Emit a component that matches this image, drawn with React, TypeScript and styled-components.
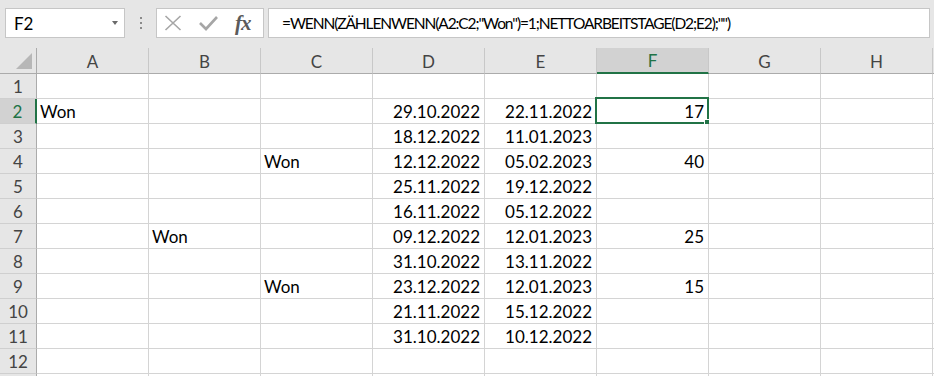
import React, { FC } from "react";
import styled, { createGlobalStyle, css } from "styled-components";

const GREEN = "#217346";
const FONT = `Lato, "Open Sans", "Liberation Sans", sans-serif`;

const GlobalStyle = createGlobalStyle`
  html, body {
    margin: 0;
    padding: 0;
    background: #e6e6e6;
    overflow: hidden;
  }
`;

const Page = styled.div`
  width: 934px;
  height: 376px;
  overflow: hidden;
  font-family: ${FONT};
  font-size: 17px;
  color: #000;
`;

const FormulaBar = styled.div`
  display: flex;
  align-items: center;
  height: 48px;
  box-sizing: border-box;
  padding: 8px 4px 10px 5px;
  background: #e6e6e6;
`;

const NameBox = styled.div`
  position: relative;
  display: flex;
  align-items: center;
  width: 120px;
  height: 30px;
  box-sizing: border-box;
  padding-left: 8px;
  background: #fff;
  border: 1px solid #c6c6c6;
`;

const DropArrow = styled.span`
  position: absolute;
  right: 6px;
  top: 12px;
  width: 0;
  height: 0;
  border-left: 3px solid transparent;
  border-right: 3px solid transparent;
  border-top: 4px solid #6a6a6a;
`;

const Grip = styled.div`
  display: flex;
  flex-direction: column;
  gap: 3px;
  margin: 0 14px 0 15px;
  span {
    width: 2px;
    height: 2px;
    background: #8a8a8a;
  }
`;

const FxButtons = styled.div`
  display: flex;
  align-items: center;
  gap: 17px;
  width: 108px;
  height: 30px;
  box-sizing: border-box;
  padding-left: 7px;
  background: #fff;
  border: 1px solid #c6c6c6;
`;

const IconSlot = styled.div`
  display: flex;
  align-items: center;
  height: 28px;
`;

const Fx = styled.span`
  font-family: "Liberation Serif", "DejaVu Serif", serif;
  font-style: italic;
  font-weight: bold;
  font-size: 21px;
  color: #5b5b5b;
  letter-spacing: -1px;
`;

const FormulaInput = styled.div`
  display: flex;
  align-items: center;
  flex: 1;
  height: 30px;
  box-sizing: border-box;
  margin-left: 4px;
  padding-left: 13px;
  background: #fff;
  border: 1px solid #c6c6c6;
  white-space: nowrap;
  font-size: 15.5px;
  letter-spacing: -1.1px;
`;

const Sheet = styled.div`
  display: grid;
  grid-template-columns: 37px repeat(8, 112px) 1fr;
  grid-template-rows: 26px;
  grid-auto-rows: 25px;
`;

const Corner = styled.div`
  position: relative;
  background: #e6e6e6;
  border-right: 1px solid #ababab;
  border-bottom: 1px solid #ababab;
  box-sizing: border-box;
  &::after {
    content: "";
    position: absolute;
    right: 4px;
    bottom: 4px;
    width: 0;
    height: 0;
    border-left: 16px solid transparent;
    border-bottom: 16px solid #b7b7b7;
  }
`;

const ColHead = styled.div<{ $active?: boolean }>`
  display: flex;
  align-items: center;
  justify-content: center;
  box-sizing: border-box;
  background: #e6e6e6;
  color: #444;
  border-right: 1px solid #c8c8c8;
  border-bottom: 1px solid #ababab;
  padding-top: 1px;
  ${({ $active }) =>
    $active &&
    css`
      background: #d2d2d2;
      color: ${GREEN};
      border-bottom: 2px solid ${GREEN};
    `}
`;

const RowHead = styled.div<{ $active?: boolean }>`
  display: flex;
  align-items: center;
  justify-content: center;
  box-sizing: border-box;
  background: #e6e6e6;
  color: #444;
  border-right: 1px solid #ababab;
  border-bottom: 1px solid #cfcfcf;
  padding-top: 1px;
  ${({ $active }) =>
    $active &&
    css`
      background: #d2d2d2;
      color: ${GREEN};
      border-right: 2px solid ${GREEN};
    `}
`;

const Cell = styled.div<{ $num?: boolean }>`
  position: relative;
  display: flex;
  align-items: center;
  justify-content: ${({ $num }) => ($num ? "flex-end" : "flex-start")};
  box-sizing: border-box;
  padding: 1px 4px 0 3px;
  background: #fff;
  border-right: 1px solid #d4d4d4;
  border-bottom: 1px solid #d4d4d4;
  white-space: nowrap;
`;

const Selection = styled.div`
  position: absolute;
  left: -2px;
  top: -2px;
  right: -1px;
  bottom: -1px;
  border: 2px solid ${GREEN};
  pointer-events: none;
  &::after {
    content: "";
    position: absolute;
    right: -4px;
    bottom: -4px;
    width: 5px;
    height: 5px;
    background: ${GREEN};
    border: 1px solid #fff;
  }
`;

const COLS = ["A", "B", "C", "D", "E", "F", "G", "H", ""];

type Row = (string | number | null)[];

const DATA: Row[] = [
  [null, null, null, null, null, null],
  ["Won", null, null, "29.10.2022", "22.11.2022", 17],
  [null, null, null, "18.12.2022", "11.01.2023", null],
  [null, null, "Won", "12.12.2022", "05.02.2023", 40],
  [null, null, null, "25.11.2022", "19.12.2022", null],
  [null, null, null, "16.11.2022", "05.12.2022", null],
  [null, "Won", null, "09.12.2022", "12.01.2023", 25],
  [null, null, null, "31.10.2022", "13.11.2022", null],
  [null, null, "Won", "23.12.2022", "12.01.2023", 15],
  [null, null, null, "21.11.2022", "15.12.2022", null],
  [null, null, null, "31.10.2022", "10.12.2022", null],
  [null, null, null, null, null, null],
  [null, null, null, null, null, null],
];

const isNum = (v: string | number | null) =>
  typeof v === "number" || (typeof v === "string" && /^\d/.test(v));

const App: FC = () => {
  return (
    <Page>
      <GlobalStyle />
      <FormulaBar>
        <NameBox>
          F2
          <DropArrow />
        </NameBox>
        <Grip>
          <span />
          <span />
          <span />
        </Grip>
        <FxButtons>
          <IconSlot>
            <svg width="18" height="16" viewBox="0 0 18 16">
              <path d="M1.5 1 L16.5 15 M16.5 1 L1.5 15" stroke="#a6a6a6" strokeWidth="1.6" />
            </svg>
          </IconSlot>
          <IconSlot>
            <svg width="19" height="16" viewBox="0 0 19 16">
              <path d="M1 8 L7 14 L18 2" stroke="#a6a6a6" strokeWidth="2.6" fill="none" />
            </svg>
          </IconSlot>
          <Fx>fx</Fx>
        </FxButtons>
        <FormulaInput>
          =WENN(ZÄHLENWENN(A2:C2;"Won")=1;NETTOARBEITSTAGE(D2;E2);"")
        </FormulaInput>
      </FormulaBar>
      <Sheet>
        <Corner />
        {COLS.map((c, i) => (
          <ColHead key={i} $active={c === "F"}>
            {c}
          </ColHead>
        ))}
        {DATA.map((row, r) => (
          <React.Fragment key={r}>
            <RowHead $active={r === 1}>{r < 12 ? r + 1 : null}</RowHead>
            {COLS.map((_, c) => {
              const v = c < row.length ? row[c] : null;
              return (
                <Cell key={c} $num={isNum(v)}>
                  {v}
                  {r === 1 && c === 5 && <Selection />}
                </Cell>
              );
            })}
          </React.Fragment>
        ))}
      </Sheet>
    </Page>
  );
};

export default App;
